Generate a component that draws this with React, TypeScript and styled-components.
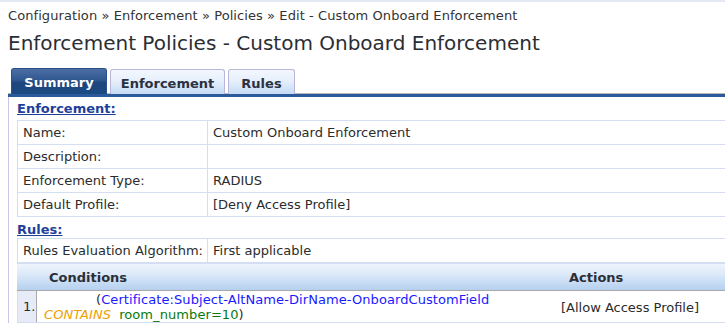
import React from "react";
import styled, { createGlobalStyle } from "styled-components";

const Global = createGlobalStyle`
  html, body { margin: 0; padding: 0; background: #fff; }
  body { font-family: "DejaVu Sans", Verdana, sans-serif; font-size: 13px; color: #2b2b2b; overflow: hidden; }
`;

const Page = styled.div`
  width: 725px;
  height: 323px;
  border-top: 2px solid #e2e9f5;
  box-sizing: border-box;
  overflow: hidden;
`;

const Breadcrumb = styled.div`
  padding: 4px 0 0 8px;
  height: 20px;
  line-height: 20px;
  font-size: 13px;
  letter-spacing: 0.08px;
  color: #333;
  white-space: nowrap;
`;

const Title = styled.h1`
  margin: 0;
  padding: 4px 0 0 8px;
  height: 26px;
  line-height: 26px;
  font-size: 20px;
  font-weight: normal;
  color: #2b2e33;
  white-space: nowrap;
`;

const TabBar = styled.div`
  display: flex;
  align-items: flex-end;
  gap: 3px;
  margin-top: 12px;
  margin-left: 8px;
  padding-left: 3px;
  height: 25px;
  border-bottom: 1px solid #b8b8b8;
`;

const Tab = styled.div<{ $active?: boolean; $w: number }>`
  width: ${(p) => p.$w}px;
  height: ${(p) => (p.$active ? "26px" : "25px")};
  box-sizing: border-box;
  display: flex;
  align-items: center;
  justify-content: center;
  padding-top: 2px;
  font-weight: bold;
  font-size: 13px;
  border-radius: 3px 3px 0 0;
  margin-bottom: -1px;
  color: ${(p) => (p.$active ? "#ffffff" : "#2a3140")};
  background: ${(p) =>
    p.$active
      ? "linear-gradient(#4d6ea5 0%, #2f5790 45%, #1c467d 55%, #1b4a82 100%)"
      : "linear-gradient(#f4f8fe 0%, #e4eefb 50%, #c4dbf4 100%)"};
  border: 1px solid ${(p) => (p.$active ? "#27528c" : "#b9b6dc")};
  border-bottom: none;
`;

const BlueBar = styled.div`
  margin-left: 8px;
  height: 3px;
  background: #2a5a9c;
`;

const Panel = styled.div`
  margin-left: 8px;
  border-left: 1px solid #c6c6e6;
  padding: 3px 0 0 8px;
`;

const Heading = styled.div`
  font-weight: bold;
  font-size: 13px;
  color: #1f3f99;
  text-decoration: underline;
  height: 17px;
  line-height: 17px;
  margin-bottom: 3px;
`;

const KV = styled.div`
  display: grid;
  grid-template-columns: 190px 1fr;
  border-top: 1px solid #d3def3;
`;

const Cell = styled.div`
  height: 23px;
  line-height: 23px;
  padding-left: 5px;
  border-bottom: 1px solid #d3def3;
  border-left: 1px solid #d3def3;
  white-space: nowrap;
  color: #2b2b2b;
`;

const RulesHeading = styled(Heading)`
  margin-top: 4px;
  margin-bottom: 0;
`;

const RulesTable = styled.div``;

const HeadRow = styled.div`
  display: grid;
  grid-template-columns: 20px 508px 1fr;
  height: 26px;
  background: linear-gradient(#eef4fc 0%, #dce9f9 40%, #b5d0ef 100%);
  border-top: 1px solid #d3def3;
  border-bottom: 1px solid #a9a9a9;
  font-weight: bold;
  color: #2b2f38;
  align-items: center;
`;

const HeadCell = styled.div<{ $pad: number }>`
  padding-left: ${(p) => p.$pad}px;
  white-space: nowrap;
`;

const DataRow = styled.div`
  display: grid;
  grid-template-columns: 20px 508px 1fr;
  border-bottom: 2px solid #d3def3;
  height: 33px;
  box-sizing: border-box;
`;

const IndexCell = styled.div`
  background: #e6ebf7;
  border-left: 1px solid #d3def3;
  border-right: 1px solid #a9a9a9;
  display: flex;
  align-items: center;
  padding-left: 5px;
`;

const CondCell = styled.div`
  padding: 1px 0 0 7px;
  line-height: 15px;
  text-indent: 52px;
  letter-spacing: 0.08px;
`;

const ActionCell = styled.div`
  display: flex;
  align-items: center;
  padding-left: 16px;
  padding-top: 2px;
  white-space: nowrap;
`;

const Attr = styled.span`
  color: #1a1aff;
`;
const Op = styled.span`
  color: #f0a000;
  font-style: italic;
  margin-right: 8px;
`;
const Val = styled.span`
  color: #0a7a0a;
`;

export default function App() {
  const rows: [string, string][] = [
    ["Name:", "Custom Onboard Enforcement"],
    ["Description:", ""],
    ["Enforcement Type:", "RADIUS"],
    ["Default Profile:", "[Deny Access Profile]"],
  ];
  return (
    <Page>
      <Global />
      <Breadcrumb>Configuration » Enforcement » Policies » Edit - Custom Onboard Enforcement</Breadcrumb>
      <Title>Enforcement Policies - Custom Onboard Enforcement</Title>
      <TabBar>
        <Tab $active $w={96}>Summary</Tab>
        <Tab $w={115}>Enforcement</Tab>
        <Tab $w={67}>Rules</Tab>
      </TabBar>
      <BlueBar />
      <Panel>
        <Heading>Enforcement:</Heading>
        <KV>
          {rows.map(([k, v]) => (
            <React.Fragment key={k}>
              <Cell>{k}</Cell>
              <Cell>{v}</Cell>
            </React.Fragment>
          ))}
        </KV>
        <RulesHeading>Rules:</RulesHeading>
        <KV>
          <Cell>Rules Evaluation Algorithm:</Cell>
          <Cell>First applicable</Cell>
        </KV>
        <RulesTable>
          <HeadRow>
            <HeadCell $pad={0}></HeadCell>
            <HeadCell $pad={12}>Conditions</HeadCell>
            <HeadCell $pad={24}>Actions</HeadCell>
          </HeadRow>
          <DataRow>
            <IndexCell>1.</IndexCell>
            <CondCell>
              (<Attr>Certificate:Subject-AltName-DirName-OnboardCustomField</Attr> <Op>CONTAINS</Op>
              <Val>room_number=10</Val>)
            </CondCell>
            <ActionCell>[Allow Access Profile]</ActionCell>
          </DataRow>
        </RulesTable>
      </Panel>
    </Page>
  );
}
